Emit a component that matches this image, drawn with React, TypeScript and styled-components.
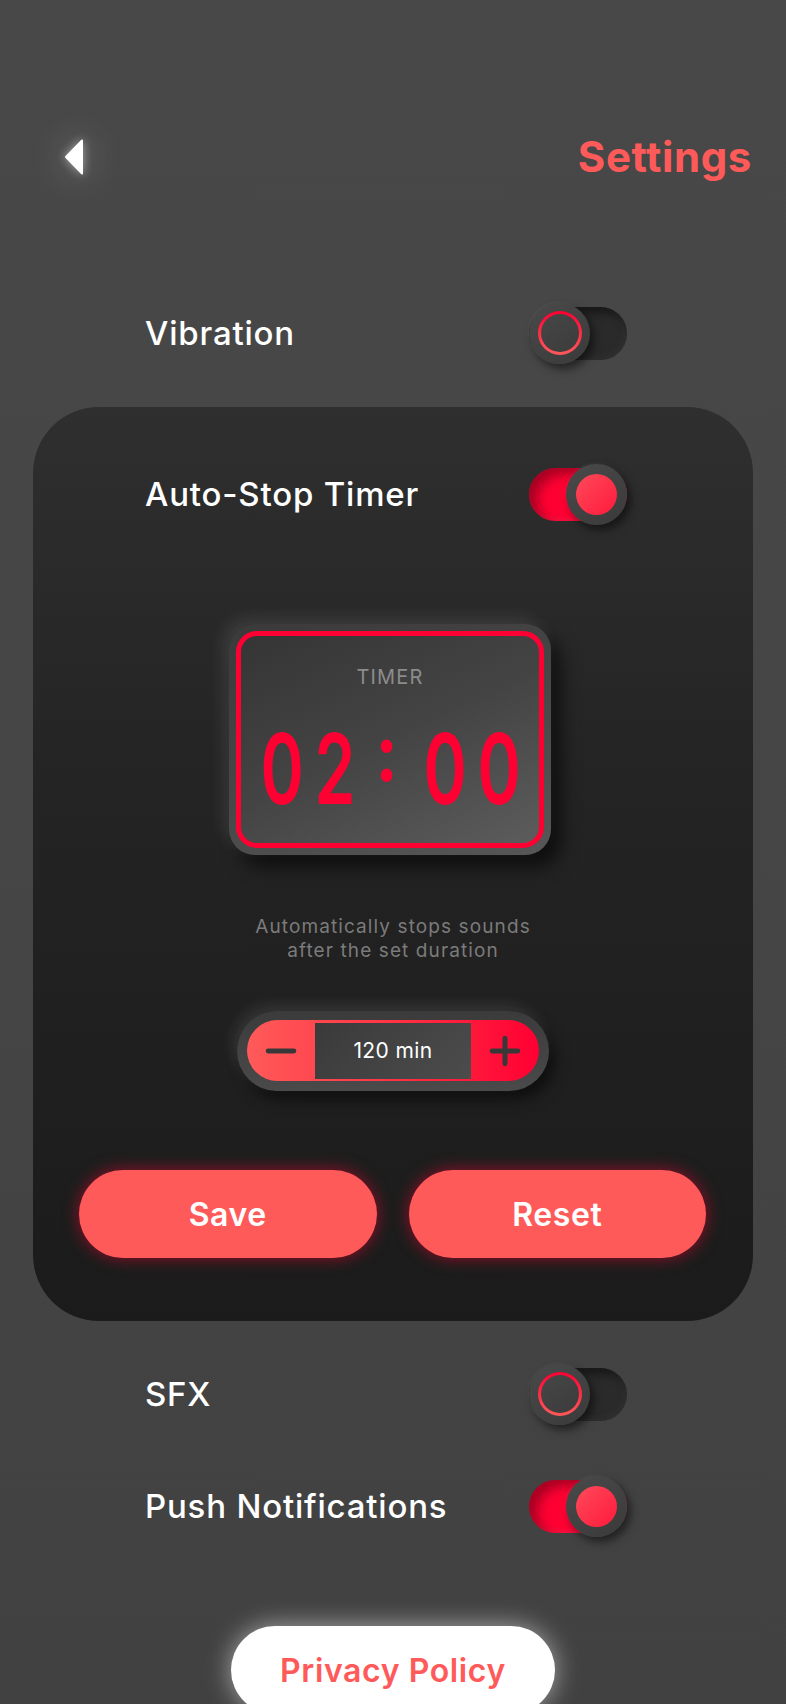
import React from "react";
import styled, { createGlobalStyle } from "styled-components";
import { Minus, Plus } from "lucide-react";

const FONT = `"Inter", "Noto Sans", sans-serif`;

const Global = createGlobalStyle`
  html, body { margin: 0; padding: 0; background: #444444; }
  body { font-family: ${FONT}; -webkit-font-smoothing: antialiased; }
  * { box-sizing: border-box; }
`;

const Page = styled.div`
  width: 786px;
  height: 1704px;
  overflow: hidden;
  background: linear-gradient(180deg, #484848 0%, #454545 55%, #414141 100%);
  display: flex;
  flex-direction: column;
  padding-top: 131px;
`;

const Header = styled.header`
  height: 60px;
  display: flex;
  align-items: center;
  justify-content: space-between;
  padding: 0 34px 0 65px;
`;

const BackButton = styled.button`
  width: 18px;
  height: 36px;
  padding: 0;
  border: 0;
  background: transparent;
  display: flex;
  filter: drop-shadow(0 0 5px rgba(255, 255, 255, 0.5)) drop-shadow(0 0 18px rgba(255, 255, 255, 0.35));
`;

const Title = styled.h1`
  margin: 0;
  font-size: 42px;
  font-weight: 700;
  color: #ff5a5a;
  letter-spacing: 0.6px;
`;

const Section = styled.div<{ $top: number; $gap?: number }>`
  display: flex;
  flex-direction: column;
  gap: ${(p) => p.$gap ?? 0}px;
  margin-top: ${(p) => p.$top}px;
`;

const SettingRow = styled.div<{ $inCard?: boolean }>`
  height: 80px;
  display: flex;
  align-items: center;
  justify-content: space-between;
  padding: ${(p) => (p.$inCard ? "0 126px 0 112px" : "0 159px 0 145px")};
`;

const Label = styled.span`
  font-size: 33px;
  font-weight: 500;
  color: #ffffff;
  letter-spacing: 0.8px;
`;

const SwitchTrack = styled.button<{ $on: boolean }>`
  position: relative;
  width: 98px;
  height: 53px;
  padding: 0;
  border: 0;
  border-radius: 27px;
  background: ${(p) => (p.$on ? "#ff0033" : "#2a2a2a")};
  box-shadow: ${(p) =>
    p.$on
      ? "inset 8px 6px 12px rgba(90, 0, 20, 0.55), inset -2px -2px 6px rgba(255, 80, 110, 0.3)"
      : "inset 6px 6px 10px rgba(0, 0, 0, 0.45), inset -2px -2px 6px rgba(70, 70, 70, 0.25)"};
`;

const Knob = styled.span<{ $on: boolean }>`
  position: absolute;
  top: -4px;
  ${(p) => (p.$on ? "right: 0;" : "left: 0;")}
  width: 61px;
  height: 61px;
  border-radius: 50%;
  background: linear-gradient(145deg, #4a4a4a, #3a3a3a);
  box-shadow: 4px 5px 9px rgba(0, 0, 0, 0.5), -1px -1px 3px rgba(255, 255, 255, 0.06);
  display: flex;
  align-items: center;
  justify-content: center;
`;

const KnobDot = styled.span`
  width: 41px;
  height: 41px;
  border-radius: 50%;
  background: linear-gradient(135deg, #ff4a5a, #ff1a3c);
`;

const KnobRing = styled.span`
  width: 44px;
  height: 44px;
  border-radius: 50%;
  border: 3px solid transparent;
  background: linear-gradient(145deg, #464646, #3c3c3c) padding-box,
    linear-gradient(180deg, #ff0033, #ff5a5a) border-box;
`;

const Toggle = ({ on }: { on: boolean }) => (
  <SwitchTrack $on={on} aria-pressed={on}>
    <Knob $on={on}>{on ? <KnobDot /> : <KnobRing />}</Knob>
  </SwitchTrack>
);

const Card = styled.section`
  margin: 34px 33px 0;
  border-radius: 66px;
  padding: 47px 0 63px;
  background: linear-gradient(180deg, #2f2f2f 0%, #242424 40%, #1b1b1b 100%);
  display: flex;
  flex-direction: column;
`;

const TimerFrame = styled.div`
  align-self: center;
  margin-top: 90px;
  width: 322px;
  height: 231px;
  padding: 7px;
  border-radius: 26px;
  background: linear-gradient(160deg, #3a3a3a 0%, #474747 50%, #575757 100%);
  box-shadow: -6px -6px 16px rgba(255, 255, 255, 0.1), 10px 12px 18px rgba(0, 0, 0, 0.6);
  position: relative;
  left: -3px;
`;

const TimerScreen = styled.div`
  height: 100%;
  border: 5px solid #ff0033;
  border-radius: 21px;
  background: linear-gradient(155deg, #353535 0%, #444444 50%, #5c5c5c 100%);
  display: flex;
  flex-direction: column;
  align-items: center;
  padding-top: 29px;
`;

const TimerLabel = styled.span`
  font-size: 20px;
  line-height: 24px;
  font-weight: 400;
  color: #8c8c8c;
  letter-spacing: 1.2px;
`;

const Digits = styled.div`
  margin-top: 30px;
  padding-right: 7px;
  display: flex;
  align-items: baseline;
  gap: 18px;
  font-family: "Inter", sans-serif;
  font-size: 98px;
  line-height: 100px;
  font-weight: 600;
  color: #ff0033;
`;

const DigitChar = styled.span`
  display: inline-block;
  width: 52px;
  margin: 0 -8px;
  text-align: center;
  transform: scaleX(0.67);
`;

const ColonChar = styled.span`
  display: inline-block;
  width: 37px;
  text-align: center;
  font-size: 80px;
  font-weight: 700;
  position: relative;
  top: -23px;
  transform: scaleX(0.85);
`;

const Description = styled.p`
  margin: 60px 0 0;
  text-align: center;
  font-size: 19px;
  line-height: 24px;
  color: #7b7b7b;
  font-weight: 400;
  letter-spacing: 1.1px;
`;

const StepperOuter = styled.div`
  align-self: center;
  margin-top: 48px;
  width: 312px;
  height: 80px;
  padding: 9px 10px 10px;
  border-radius: 40px;
  background: linear-gradient(180deg, #3b3b3b, #4a4a4a);
  box-shadow: -4px -6px 14px rgba(255, 255, 255, 0.1), 6px 8px 14px rgba(0, 0, 0, 0.55);
`;

const StepperPill = styled.div`
  height: 100%;
  border-radius: 31px;
  background: linear-gradient(90deg, #ff5a5a 0%, #ff3344 50%, #ff0033 100%);
  display: flex;
  align-items: center;
`;

const StepButton = styled.button`
  flex: 1;
  height: 100%;
  border: 0;
  padding: 0;
  background: transparent;
  display: flex;
  align-items: center;
  justify-content: center;
  color: #383838;
`;

const StepValue = styled.div`
  width: 156px;
  height: 56px;
  background: linear-gradient(135deg, #3a3a3a, #4c4c4c);
  display: flex;
  align-items: center;
  justify-content: center;
  font-size: 21px;
  letter-spacing: 0.4px;
  color: #ffffff;
  font-weight: 400;
`;

const ButtonRow = styled.div`
  margin-top: 79px;
  padding: 0 47px 0 46px;
  display: grid;
  grid-template-columns: 1fr 1fr;
  gap: 32px;
`;

const RedButton = styled.button`
  height: 88px;
  border: 0;
  border-radius: 44px;
  background: #ff5a5a;
  color: #ffffff;
  font-family: ${FONT};
  font-size: 32px;
  font-weight: 600;
  letter-spacing: 0.6px;
  box-shadow: 0 0 16px rgba(255, 0, 51, 0.55);
`;

const PrivacyButton = styled.button`
  align-self: center;
  margin-top: 80px;
  width: 324px;
  height: 88px;
  flex-shrink: 0;
  border: 0;
  border-radius: 44px;
  background: #ffffff;
  color: #ff5a5a;
  font-family: ${FONT};
  font-size: 32px;
  font-weight: 600;
  letter-spacing: 0.6px;
  box-shadow: 0 0 26px rgba(255, 255, 255, 0.55);
`;

const TIME = "02:00";

export default function App() {
  return (
    <>
      <Global />
      <Page>
        <Header>
          <BackButton aria-label="Back">
            <svg width="18" height="36" viewBox="0 0 18 36">
              <path d="M17 1.5 L1 18 L17 34.5 Z" fill="#ffffff" stroke="#ffffff" strokeWidth="2" strokeLinejoin="round" />
            </svg>
          </BackButton>
          <Title>Settings</Title>
        </Header>

        <Section $top={111}>
          <SettingRow>
            <Label>Vibration</Label>
            <Toggle on={false} />
          </SettingRow>
        </Section>

        <Card>
          <SettingRow $inCard>
            <Label>Auto-Stop Timer</Label>
            <Toggle on={true} />
          </SettingRow>

          <TimerFrame>
            <TimerScreen>
              <TimerLabel>TIMER</TimerLabel>
              <Digits aria-label={TIME}>
                {TIME.split("").map((ch, i) =>
                  ch === ":" ? <ColonChar key={i}>:</ColonChar> : <DigitChar key={i}>{ch}</DigitChar>
                )}
              </Digits>
            </TimerScreen>
          </TimerFrame>

          <Description>
            Automatically stops sounds
            <br />
            after the set duration
          </Description>

          <StepperOuter>
            <StepperPill>
              <StepButton aria-label="Decrease">
                <Minus size={44} strokeWidth={2.7} />
              </StepButton>
              <StepValue>120 min</StepValue>
              <StepButton aria-label="Increase">
                <Plus size={44} strokeWidth={2.7} />
              </StepButton>
            </StepperPill>
          </StepperOuter>

          <ButtonRow>
            <RedButton>Save</RedButton>
            <RedButton>Reset</RedButton>
          </ButtonRow>
        </Card>

        <Section $top={33} $gap={32}>
          <SettingRow>
            <Label>SFX</Label>
            <Toggle on={false} />
          </SettingRow>
          <SettingRow>
            <Label>Push Notifications</Label>
            <Toggle on={true} />
          </SettingRow>
        </Section>

        <PrivacyButton>Privacy Policy</PrivacyButton>
      </Page>
    </>
  );
}
